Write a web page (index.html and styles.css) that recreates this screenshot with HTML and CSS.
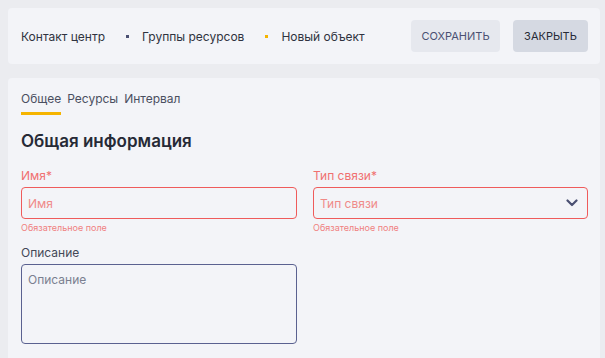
FILE: index.html
```html
<!DOCTYPE html>
<html lang="ru">
<head>
  <meta charset="UTF-8" />
  <meta name="viewport" content="width=device-width, initial-scale=1.0"/>
  <title>Новый объект</title>
  <link rel="stylesheet" href="styles.css">
</head>
<body>
  <header class="topbar">
    <nav class="crumbs">
      <span class="crumb">Контакт центр</span>
      <span class="dot"></span>
      <span class="crumb">Группы ресурсов</span>
      <span class="dot dot-active"></span>
      <span class="crumb">Новый объект</span>
    </nav>
    <div class="actions">
      <button class="btn btn-save">Сохранить</button>
      <button class="btn btn-close">Закрыть</button>
    </div>
  </header>

  <main class="card">
    <div class="tabs">
      <span class="tab active">Общее</span>
      <span class="tab">Ресурсы</span>
      <span class="tab">Интервал</span>
    </div>

    <h2>Общая информация</h2>

    <form class="form">
      <div class="field invalid">
        <label>Имя*</label>
        <input type="text" placeholder="Имя" />
        <span class="hint">Обязательное поле</span>
      </div>
      <div class="field invalid">
        <label>Тип связи*</label>
        <div class="select">
          <span>Тип связи</span>
          <svg width="12" height="8" viewBox="0 0 12 8"><path d="M1.5 1.5 L6 6 L10.5 1.5" fill="none" stroke="#4a5072" stroke-width="2.2" stroke-linecap="round" stroke-linejoin="round"/></svg>
        </div>
        <span class="hint">Обязательное поле</span>
      </div>
      <div class="field">
        <label>Описание</label>
        <textarea placeholder="Описание"></textarea>
      </div>
    </form>
  </main>
</body>
</html>
```

FILE: styles.css
```css
* { box-sizing: border-box; }
body {
  font-family: Inter, 'Noto Sans', sans-serif;
  background: #ebecf0;
  margin: 0;
  padding: 8px 5px 0 8px;
  color: #2f3340;
  height: 358px;
  overflow: hidden;
  display: flex;
  flex-direction: column;
  gap: 14px;
}
.topbar {
  background: #f3f4f8;
  border-radius: 4px;
  height: 56px;
  padding: 0 12px 0 13px;
  display: flex;
  align-items: center;
  justify-content: space-between;
}
.crumbs {
  display: flex;
  align-items: center;
  font-size: 12px;
}
.dot {
  width: 3px;
  height: 3px;
  background: #4a5072;
  margin: 0 13px 0 21px;
}
.dot-active { background: #f5b400; }
.actions {
  display: flex;
  gap: 13px;
}
.btn {
  font-family: inherit;
  font-size: 11px;
  text-transform: uppercase;
  border: none;
  border-radius: 4px;
  height: 32px;
  padding: 0;
  cursor: pointer;
}
.btn-save {
  width: 89px;
  background: #e6e8ee;
  color: #4a5072;
}
.btn-close {
  width: 75px;
  background: #d5d9e2;
  color: #262a36;
}
.card {
  background: #f3f4f8;
  border-radius: 4px 4px 0 0;
  flex: 1;
  padding: 13px 12px 0 13px;
}
.tabs {
  display: flex;
  gap: 6px;
  font-size: 12px;
  color: #4a4f60;
}
.tab {
  line-height: 16px;
  padding-bottom: 5px;
  border-bottom: 3px solid transparent;
}
.tab.active { border-bottom-color: #f5b400; }
h2 {
  font-size: 17px;
  font-weight: 600;
  line-height: 22px;
  margin: 15px 0 17px;
  color: #262a36;
}
.form {
  display: grid;
  grid-template-columns: 276px 275px;
  column-gap: 16px;
  row-gap: 12px;
}
.field {
  display: flex;
  flex-direction: column;
}
.field label {
  font-size: 12px;
  line-height: 14px;
  margin-bottom: 4px;
  color: #434857;
}
.field input,
.field .select,
.field textarea {
  font-family: inherit;
  font-size: 12px;
  height: 32px;
  border: 1px solid #5a6190;
  border-radius: 4px;
  background: #f3f4f8;
  padding: 0 6px;
  color: #2f3340;
}
.field .select {
  display: flex;
  align-items: center;
  justify-content: space-between;
  padding: 0 9px 0 6px;
}
.field textarea {
  height: 80px;
  padding: 7px 6px;
  resize: none;
}
.field textarea::placeholder { color: #7a7f90; }
.invalid label { color: #f07070; }
.invalid input,
.invalid .select {
  border-color: #ef5b5b;
  color: #f08a88;
}
.invalid input::placeholder { color: #f08a88; }
.hint {
  font-size: 9px;
  line-height: 12px;
  margin-top: 3px;
  color: #f08080;
}
```
